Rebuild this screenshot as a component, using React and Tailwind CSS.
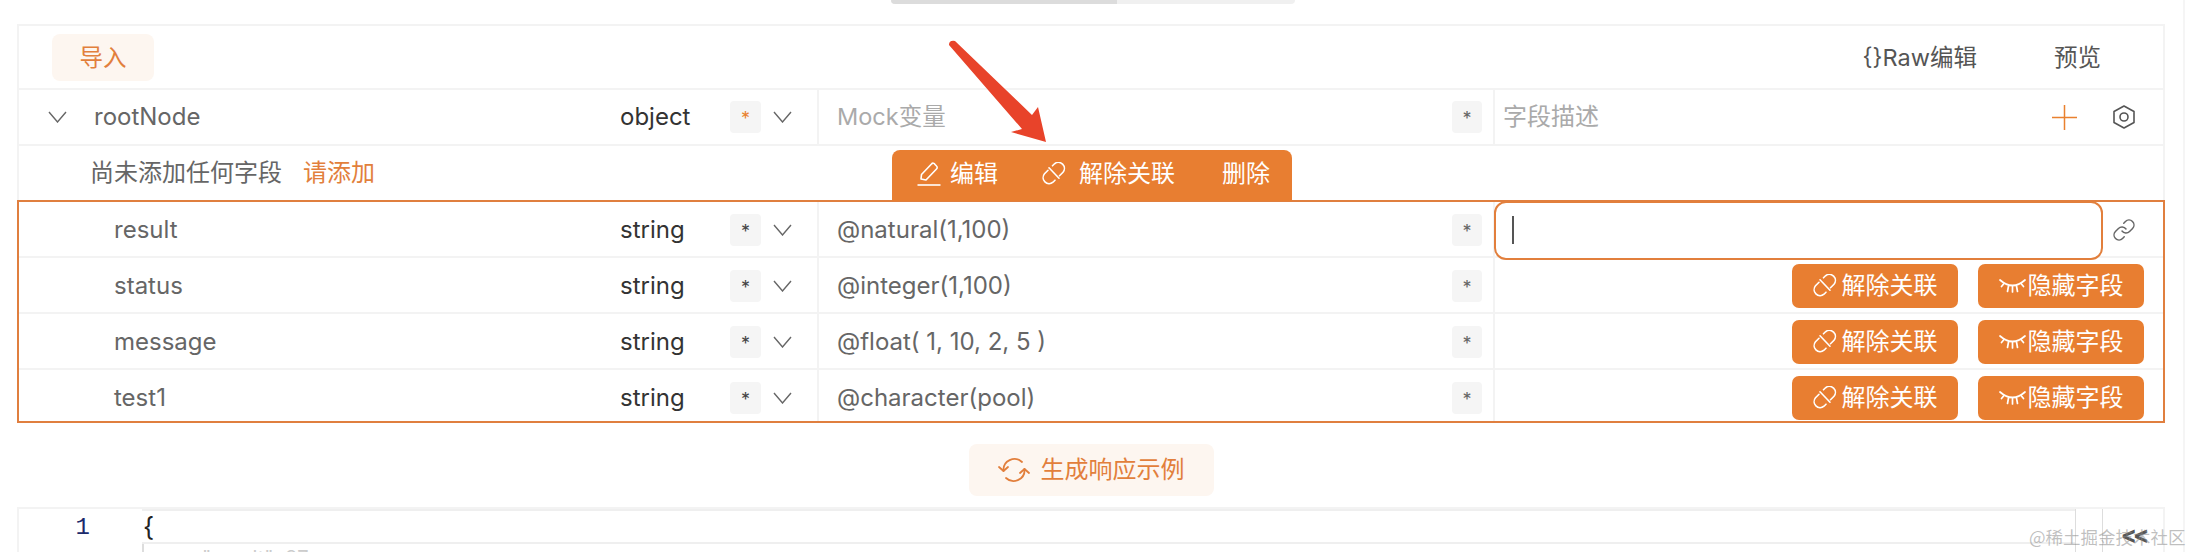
import React from "react";
import { Link } from "lucide-react";

const Chevron = () => (
  <svg width="19" height="12" viewBox="0 0 19 12" fill="none" stroke="#666" strokeWidth="1.4">
    <polyline points="1,1 9.5,11 18,1" />
  </svg>
);

const UnlinkIcon = ({ className }) => (
  <svg className={className} width="24" height="24" viewBox="0 0 24 24" fill="none" stroke="currentColor" strokeWidth="1.6" strokeLinecap="round">
    <path d="M10.5 3.8 L12.5 1.8 A6 6 0 0 1 21 10.2 L17.5 13.7" />
    <path d="M13 18.2 L11 20.2 A6 6 0 0 1 2.5 11.8 L6 8.3" />
    <path d="M7 5.8 L17 16.2" />
  </svg>
);

const PencilIcon = () => (
  <svg width="24" height="24" viewBox="0 0 24 24" fill="none" stroke="currentColor" strokeWidth="1.6">
    <path d="M4 17 L4.5 12.5 L14.5 2 A2 2 0 0 1 18 2.5 L19.5 4 A2 2 0 0 1 19.5 7 L9 18 Z" strokeLinejoin="round" />
    <path d="M0.5 23 H23.5" />
  </svg>
);

const EyeClosedIcon = () => (
  <svg width="27" height="14" viewBox="0 0 27 14" fill="none" stroke="currentColor" strokeWidth="1.7" strokeLinecap="round">
    <path d="M1 1 Q13.5 12 26 1" />
    <path d="M5 4.5 L2.5 7.5 M9.5 7 L8.5 12.5 M13.5 7.5 V13 M17.5 7 L18.5 12.5 M22 4.5 L24.5 7.5" />
  </svg>
);

const RefreshIcon = () => (
  <svg width="32" height="26" viewBox="0 0 32 26" fill="none" stroke="#e27f3c" strokeWidth="1.8" strokeLinecap="round" strokeLinejoin="round">
    <path d="M5.5 14 A11 11 0 0 1 24 5" />
    <path d="M26.5 12 A11 11 0 0 1 8 21" />
    <polyline points="1,10 5.5,14 10,10" />
    <polyline points="22,16 26.5,12 31,16" />
  </svg>
);

const HexIcon = () => (
  <svg width="22" height="24" viewBox="0 0 22 24" fill="none" stroke="#555" strokeWidth="1.6">
    <polygon points="11,1 21,6.5 21,17.5 11,23 1,17.5 1,6.5" strokeLinejoin="round" />
    <circle cx="11" cy="12" r="4" />
  </svg>
);

const PlusIcon = () => (
  <svg width="25" height="25" viewBox="0 0 25 25" stroke="#e9812f" strokeWidth="1.5">
    <path d="M12.5 0 V25 M0 12.5 H25" />
  </svg>
);

const Star = ({ color = "text-[#444]", width = "w-[31px]" }) => (
  <span className={`flex h-[32px] ${width} items-center justify-center rounded-[4px] bg-[#f5f5f5] pt-[3px] text-[18px] ${color}`}>
    *
  </span>
);

const OrangeButton = ({ icon, label }) => (
  <button className="flex h-[44px] w-[166px] items-center justify-center rounded-[7px] bg-[#e87e31] text-[24px] text-white">
    {icon}
    <span>{label}</span>
  </button>
);

const fields = [
  { name: "result", mock: "@natural(1,100)", row: "h-[58px] border-b-2", pad: "pt-[4px]", editing: true },
  { name: "status", mock: "@integer(1,100)", row: "h-[56px] border-b-2", pad: "pt-[2px]" },
  { name: "message", mock: "@float( 1, 10, 2, 5 )", row: "h-[56px] border-b-2", pad: "pt-[2px]" },
  { name: "test1", mock: "@character(pool)", row: "h-[53px]", pad: "pt-[3px]" },
];

const FieldRow = ({ field }) => (
  <div className={`flex border-[#f3f3f3] ${field.row}`}>
    <div className={`flex w-[800px] items-center ${field.pad}`}>
      <span className="w-[603px] pl-[97px] text-[24px] text-[#666]">{field.name}</span>
      <span className="w-[110px] text-[24px] text-[#333]">string</span>
      <Star />
      <span className="ml-[12px] flex"><Chevron /></span>
    </div>
    <div className={`flex w-[676px] items-center justify-between border-l-2 border-[#f3f3f3] pl-[18px] pr-[11px] ${field.pad}`}>
      <span className="text-[24px] text-[#666]">{field.mock}</span>
      <Star color="text-[#666]" width="w-[30px]" />
    </div>
    <div className={`flex flex-1 items-center border-l-2 border-[#f3f3f3] ${field.pad}`}>
      {field.editing ? (
        <>
          <div className="relative z-10 -ml-[1px] flex h-[59px] w-[609px] items-center rounded-[12px] border-2 border-[#e27f3c] bg-white pl-[16px]">
            <span className="h-[28px] w-[2px] bg-[#555]" />
          </div>
          <Link className="ml-[9px] text-[#666]" size={24} strokeWidth={1.5} />
        </>
      ) : (
        <div className="flex w-full justify-end gap-[20px] pr-[21px]">
          <OrangeButton icon={<UnlinkIcon className="mr-[5px]" />} label="解除关联" />
          <OrangeButton icon={<span className="mr-[2px] flex"><EyeClosedIcon /></span>} label="隐藏字段" />
        </div>
      )}
    </div>
  </div>
);

const App = () => {
  return (
    <div className="relative flex h-[552px] overflow-hidden bg-white font-[Inter,'Noto_Sans_CJK_SC',sans-serif]">
      <div className="w-[2183px] shrink-0">
        <div className="ml-[891px] flex h-[4px] w-[404px] overflow-hidden rounded-b-[4px] bg-[#f0f0f0]">
          <div className="w-[226px] bg-[#dcdcdc]" />
        </div>

        <div className="relative ml-[17px] mt-[20px] w-[2148px] shadow-[inset_0_0_0_2px_#f3f3f3]">
          {/* header */}
          <div className="flex h-[66px] items-center border-b-2 border-[#f3f3f3] pl-[35px] pr-[64px] pt-[3px]">
            <button className="flex h-[47px] w-[102px] items-center justify-center rounded-[8px] bg-[#fdf6f0] text-[23.5px] text-[#e27f3c]">
              导入
            </button>
            <div className="ml-auto flex items-center gap-[77px] text-[23.5px] text-[#555]">
              <span>{"{}"}Raw编辑</span>
              <span>预览</span>
            </div>
          </div>

          {/* root node */}
          <div className="flex h-[56px] border-b-2 border-[#f3f3f3]">
            <div className="flex w-[800px] items-center pl-[31px]">
              <Chevron />
              <span className="ml-[27px] w-[526px] text-[24px] text-[#666]">rootNode</span>
              <span className="w-[110px] text-[24px] text-[#333]">object</span>
              <Star color="text-[#e9812f]" />
              <span className="ml-[12px] flex"><Chevron /></span>
            </div>
            <div className="flex w-[676px] items-center justify-between border-l-2 border-[#f3f3f3] pl-[18px] pr-[11px]">
              <span className="text-[23.5px] text-[#aaa]">Mock变量</span>
              <Star color="text-[#666]" width="w-[30px]" />
            </div>
            <div className="flex flex-1 items-center border-l-2 border-[#f3f3f3] pl-[8px] pr-[30px]">
              <span className="text-[24px] text-[#aaa]">字段描述</span>
              <span className="ml-auto flex"><PlusIcon /></span>
              <span className="ml-[36px] flex"><HexIcon /></span>
            </div>
          </div>

          <div className="flex h-[54px] items-center gap-[21px] pl-[73px] text-[24px] text-[#666]">
            <span>尚未添加任何字段</span>
            <span className="text-[#e27f3c]">请添加</span>
          </div>

          {/* linked fields */}
          <div className="relative outline-2 -outline-offset-2 outline-[#e07f3f]">
            <div className="absolute -top-[50px] left-[875px] z-20 flex h-[51px] w-[400px] items-center rounded-t-[8px] bg-[#e87e31] pb-[3px] text-[24px] text-white">
              <span className="ml-[25px] flex"><PencilIcon /></span>
              <span className="ml-[9px]">编辑</span>
              <UnlinkIcon className="ml-[44px]" />
              <span className="ml-[13px]">解除关联</span>
              <span className="ml-[47px]">删除</span>
            </div>
            {fields.map((field) => (
              <FieldRow key={field.name} field={field} />
            ))}
          </div>
        </div>

        <div className="ml-[17px] flex w-[2148px] justify-center pt-[21px]">
          <button className="flex h-[52px] w-[245px] items-center justify-center gap-[11px] rounded-[8px] bg-[#fdf6f0] text-[24px] text-[#e27f3c]">
            <RefreshIcon />
            <span>生成响应示例</span>
          </button>
        </div>

        {/* response editor */}
        <div className="ml-[17px] mt-[11px] flex h-[60px] w-[2148px] border-t-2 border-r-2 border-l-2 border-[#f3f3f3]">
          <div className="w-[123px] pr-[52px] pt-[5px] text-right font-['Liberation_Mono',monospace] text-[24px] leading-[28px] text-[#1b2a6b]">
            1
          </div>
          <div className="flex flex-1 flex-col">
            <div className="flex h-[35px] items-center border-y-2 border-[#efefef] pl-[1px] text-[26px] text-[#222]">{"{"}</div>
            <div className="h-[20px] border-l-2 border-[#ddd] pl-[58px] pt-[2px] text-[20px] leading-[24px] text-[#ccc]">
              "result": 87,
            </div>
          </div>
          <div className="w-[28px] border-x border-[#ddd]" />
          <div className="flex w-[60px] justify-center pt-[12px] text-[24px] font-bold leading-[28px] tracking-[-4px] text-[#555]">
            {"<<"}
          </div>
        </div>
      </div>
      <div className="flex-1 border-l-2 border-[#f5f5f5]" />

      {/* annotation arrow */}
      <svg className="absolute left-[940px] top-[36px] z-30" width="115" height="110" viewBox="940 36 115 110">
        <path d="M949 45 Q949 40 955 41 L1032 115 L1038 107 L1046 142 L1011 132 L1022 129 Z" fill="#e8432a" />
      </svg>

      <span className="absolute left-[2029px] top-[524px] z-30 text-[17.5px] text-[#8888] font-['Noto_Sans_CJK_SC',sans-serif]">
        @稀土掘金技术社区
      </span>
    </div>
  );
};

export default App;
